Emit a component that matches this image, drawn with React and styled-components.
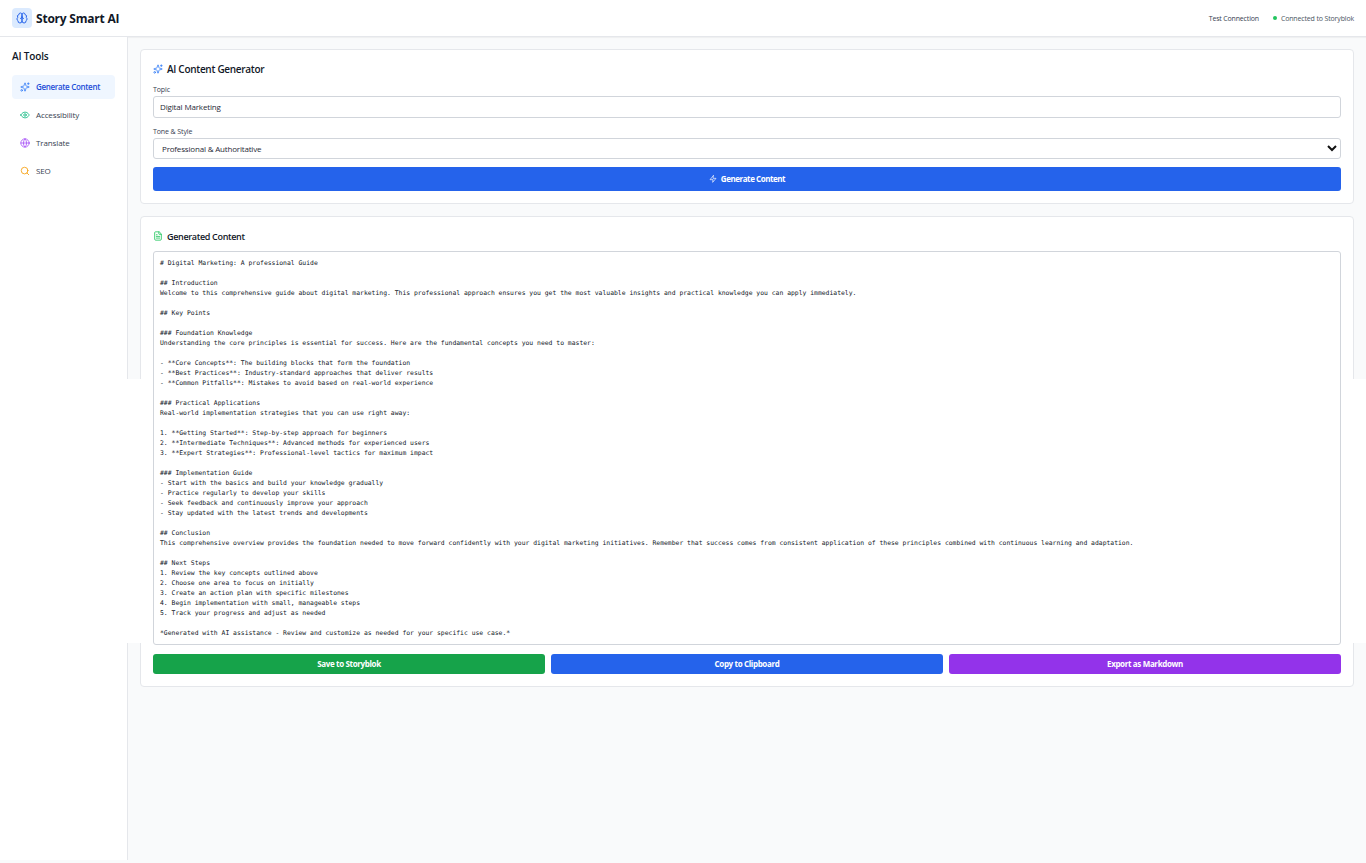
import styled, { createGlobalStyle } from "styled-components";
import { Sparkles, Globe, Search, FileText } from "lucide-react";

const GlobalStyle = createGlobalStyle`
  * {
    box-sizing: border-box;
    margin: 0;
    padding: 0;
  }

  body {
    font-family: "Open Sans", "Noto Sans", sans-serif;
    background-color: #f9fafb;
    color: #111827;
    overflow: hidden;
  }

  svg {
    display: block;
    flex-shrink: 0;
  }
`;

const PageDiv = styled.div`
  height: 863px;
  display: flex;
  flex-direction: column;
  padding-bottom: 3px;
`;

const HeaderBar = styled.header`
  height: 37px;
  flex-shrink: 0;
  padding: 0 12px;
  display: flex;
  align-items: center;
  justify-content: space-between;
  background-color: #fff;
  border-bottom: 1px solid #e5e7eb;
  box-shadow: 0 1px 1px rgba(0, 0, 0, 0.04);
`;

const BrandDiv = styled.div`
  display: flex;
  align-items: center;
  gap: 4px;
`;

const BrandIconDiv = styled.div`
  width: 20px;
  height: 20px;
  display: flex;
  align-items: center;
  justify-content: center;
  border-radius: 4px;
  background-color: #dbeafe;
  color: #2563eb;
`;

const BrandTitle = styled.h1`
  padding-top: 2px;
  font-size: 12px;
  font-weight: 700;
  line-height: 16px;
  letter-spacing: -0.22px;
`;

const HeaderRightDiv = styled.div`
  display: flex;
  align-items: center;
  gap: 14px;
  padding-top: 1px;
`;

const TestButton = styled.button`
  border: none;
  background: none;
  font-family: inherit;
  font-size: 7px;
  line-height: 10px;
  font-weight: 500;
  color: #374151;
  letter-spacing: -0.17px;
`;

const StatusDiv = styled.div`
  display: flex;
  align-items: center;
  gap: 4px;
  font-size: 7px;
  line-height: 10px;
  color: #4b5563;
  letter-spacing: -0.15px;
`;

const StatusDot = styled.span`
  width: 4px;
  height: 4px;
  margin-bottom: 1px;
  border-radius: 50%;
  background-color: #22c55e;
`;

const BodyDiv = styled.div`
  flex: 1;
  display: flex;
  min-height: 0;
`;

const SidebarNav = styled.nav`
  width: 128px;
  flex-shrink: 0;
  padding: 12px;
  background-color: #fff;
  border-right: 1px solid #e5e7eb;
`;

const SidebarTitle = styled.h2`
  font-size: 10px;
  line-height: 15px;
  font-weight: 600;
  margin-bottom: 11px;
  letter-spacing: -0.15px;
`;

const NavList = styled.ul`
  list-style: none;
  display: flex;
  flex-direction: column;
  gap: 4px;
`;

const NavItem = styled.li`
  height: 24px;
  padding: 0 8px;
  display: flex;
  align-items: center;
  gap: 6px;
  border-radius: 4px;
  font-size: 8px;
  font-weight: ${(props) => (props.$active ? 600 : 500)};
  letter-spacing: ${(props) => (props.$active ? -0.32 : -0.12)}px;
  color: ${(props) => (props.$active ? "#1d4ed8" : "#374151")};
  background-color: ${(props) => (props.$active ? "#eff6ff" : "transparent")};

  span {
    padding-bottom: 2px;
  }

  svg {
    color: ${(props) => props.$iconColor};
  }
`;

const MainDiv = styled.main`
  flex: 1;
  padding: 12px;
  display: flex;
  flex-direction: column;
  gap: 12px;
`;

const CardSection = styled.section`
  padding: 12px;
  background-color: #fff;
  border: 1px solid #e5e7eb;
  border-radius: 4px;
`;

const CardTitle = styled.h2`
  height: 14px;
  display: flex;
  align-items: center;
  gap: 4px;
  margin-bottom: 8px;
  font-size: ${(props) => (props.$large ? 10 : 9)}px;
  font-weight: 600;
  letter-spacing: ${(props) => (props.$large ? -0.3 : -0.33)}px;

  svg {
    color: ${(props) => props.$iconColor};
  }
`;

const FieldDiv = styled.div`
  margin-bottom: 8px;
`;

const FieldLabel = styled.label`
  display: block;
  height: 10px;
  margin-bottom: 2px;
  font-size: 7px;
  line-height: 11px;
  font-weight: 500;
  color: #374151;
  letter-spacing: -0.1px;
`;

const TextInput = styled.input`
  display: block;
  width: 100%;
  height: 22px;
  padding: 0 6px 2px;
  border: 1px solid #d1d5db;
  border-radius: 3px;
  outline: none;
  font-family: inherit;
  font-size: 8px;
  color: #1f2937;
  letter-spacing: -0.15px;
`;

const SelectDiv = styled.div`
  height: 21px;
  padding: 0 3px 0 8px;
  display: flex;
  align-items: center;
  justify-content: space-between;
  border: 1px solid #d1d5db;
  border-radius: 3px;
  font-size: 8px;
  color: #1f2937;
  letter-spacing: -0.18px;

  svg {
    margin-bottom: 2px;
  }
`;

const ActionButton = styled.button`
  width: 100%;
  height: ${(props) => props.$height}px;
  padding-bottom: 1px;
  display: flex;
  align-items: center;
  justify-content: center;
  gap: 4px;
  border: none;
  border-radius: 3px;
  font-family: inherit;
  font-size: 8px;
  font-weight: 700;
  letter-spacing: ${(props) => props.$spacing || -0.35}px;
  color: #fff;
  background-color: ${(props) => props.$color};
`;

/* white strip behind the editor that runs past both card edges */
const EditorDiv = styled.div`
  position: relative;
  margin-bottom: 9px;

  &::before {
    content: "";
    position: absolute;
    top: 128px;
    bottom: 2px;
    left: -26px;
    right: -25px;
    background-color: #fff;
  }
`;

const EditorPre = styled.pre`
  position: relative;
  padding: 6px;
  border: 1px solid #d1d5db;
  border-radius: 3px;
  background-color: #fff;
  font-family: "DejaVu Sans Mono", monospace;
  font-size: 6.4px;
  line-height: 10px;
  color: #111827;
`;

const ButtonRow = styled.div`
  display: grid;
  grid-template-columns: repeat(3, 1fr);
  gap: 6px;
`;

const StrokeSvg = styled.svg.attrs({
  viewBox: "0 0 24 24",
  fill: "none",
  stroke: "currentColor",
  strokeWidth: 2,
  strokeLinecap: "round",
  strokeLinejoin: "round",
})`
  width: ${(props) => props.$size}px;
  height: ${(props) => props.$size}px;
`;

const BrainIcon = ({ size }) => (
  <StrokeSvg $size={size}>
    <path d="M12 5a3 3 0 1 0-5.997.125 4 4 0 0 0-2.526 5.77 4 4 0 0 0 .556 6.588A4 4 0 1 0 12 18Z" />
    <path d="M12 5a3 3 0 1 1 5.997.125 4 4 0 0 1 2.526 5.77 4 4 0 0 1-.556 6.588A4 4 0 1 1 12 18Z" />
    <path d="M15 13a4.5 4.5 0 0 1-3-4 4.5 4.5 0 0 1-3 4" />
  </StrokeSvg>
);

const EyeIcon = ({ size }) => (
  <StrokeSvg $size={size}>
    <path d="M2 12s3-7 10-7 10 7 10 7-3 7-10 7-10-7-10-7Z" />
    <circle cx="12" cy="12" r="3" />
  </StrokeSvg>
);

const ZapIcon = ({ size }) => (
  <StrokeSvg $size={size}>
    <polygon points="13 2 3 14 12 14 11 22 21 10 12 10 13 2" />
  </StrokeSvg>
);

const navItems = [
  { label: "Generate Content", icon: Sparkles, color: "#3b82f6", active: true },
  { label: "Accessibility", icon: EyeIcon, color: "#10b981" },
  { label: "Translate", icon: Globe, color: "#a855f7" },
  { label: "SEO", icon: Search, color: "#f59e0b" },
];

const generated = `# Digital Marketing: A professional Guide

## Introduction
Welcome to this comprehensive guide about digital marketing. This professional approach ensures you get the most valuable insights and practical knowledge you can apply immediately.

## Key Points

### Foundation Knowledge
Understanding the core principles is essential for success. Here are the fundamental concepts you need to master:

- **Core Concepts**: The building blocks that form the foundation
- **Best Practices**: Industry-standard approaches that deliver results
- **Common Pitfalls**: Mistakes to avoid based on real-world experience

### Practical Applications
Real-world implementation strategies that you can use right away:

1. **Getting Started**: Step-by-step approach for beginners
2. **Intermediate Techniques**: Advanced methods for experienced users
3. **Expert Strategies**: Professional-level tactics for maximum impact

### Implementation Guide
- Start with the basics and build your knowledge gradually
- Practice regularly to develop your skills
- Seek feedback and continuously improve your approach
- Stay updated with the latest trends and developments

## Conclusion
This comprehensive overview provides the foundation needed to move forward confidently with your digital marketing initiatives. Remember that success comes from consistent application of these principles combined with continuous learning and adaptation.

## Next Steps
1. Review the key concepts outlined above
2. Choose one area to focus on initially
3. Create an action plan with specific milestones
4. Begin implementation with small, manageable steps
5. Track your progress and adjust as needed

*Generated with AI assistance - Review and customize as needed for your specific use case.*`;

const Header = () => {
  return (
    <HeaderBar>
      <BrandDiv>
        <BrandIconDiv>
          <BrainIcon size={12} />
        </BrandIconDiv>
        <BrandTitle>Story Smart AI</BrandTitle>
      </BrandDiv>
      <HeaderRightDiv>
        <TestButton>Test Connection</TestButton>
        <StatusDiv>
          <StatusDot />
          <span>Connected to Storyblok</span>
        </StatusDiv>
      </HeaderRightDiv>
    </HeaderBar>
  );
};

const Sidebar = () => {
  return (
    <SidebarNav>
      <SidebarTitle>AI Tools</SidebarTitle>
      <NavList>
        {navItems.map(({ label, icon: Icon, color, active }) => (
          <NavItem key={label} $active={active} $iconColor={color}>
            <Icon size={10} />
            <span>{label}</span>
          </NavItem>
        ))}
      </NavList>
    </SidebarNav>
  );
};

const GeneratorCard = () => {
  return (
    <CardSection>
      <CardTitle $iconColor="#3b82f6" $large>
        <Sparkles size={10} />
        <span>AI Content Generator</span>
      </CardTitle>
      <FieldDiv>
        <FieldLabel>Topic</FieldLabel>
        <TextInput defaultValue="Digital Marketing" />
      </FieldDiv>
      <FieldDiv>
        <FieldLabel>Tone &amp; Style</FieldLabel>
        <SelectDiv>
          <span>Professional &amp; Authoritative</span>
          <svg width="10" height="8" viewBox="0 0 10 8" fill="none">
            <path d="M1 2l4 4 4-4" stroke="#111" strokeWidth="2" />
          </svg>
        </SelectDiv>
      </FieldDiv>
      <ActionButton $color="#2563eb" $height={24} $spacing={-0.45}>
        <ZapIcon size={8} />
        <span>Generate Content</span>
      </ActionButton>
    </CardSection>
  );
};

const ResultCard = () => {
  return (
    <CardSection>
      <CardTitle $iconColor="#22c55e">
        <FileText size={10} />
        <span>Generated Content</span>
      </CardTitle>
      <EditorDiv>
        <EditorPre>{generated}</EditorPre>
      </EditorDiv>
      <ButtonRow>
        <ActionButton $color="#16a34a" $height={20}>
          Save to Storyblok
        </ActionButton>
        <ActionButton $color="#2563eb" $height={20}>
          Copy to Clipboard
        </ActionButton>
        <ActionButton $color="#9333ea" $height={20}>
          Export as Markdown
        </ActionButton>
      </ButtonRow>
    </CardSection>
  );
};

const App = () => {
  return (
    <PageDiv>
      <GlobalStyle />
      <Header />
      <BodyDiv>
        <Sidebar />
        <MainDiv>
          <GeneratorCard />
          <ResultCard />
        </MainDiv>
      </BodyDiv>
    </PageDiv>
  );
};

export default App;
